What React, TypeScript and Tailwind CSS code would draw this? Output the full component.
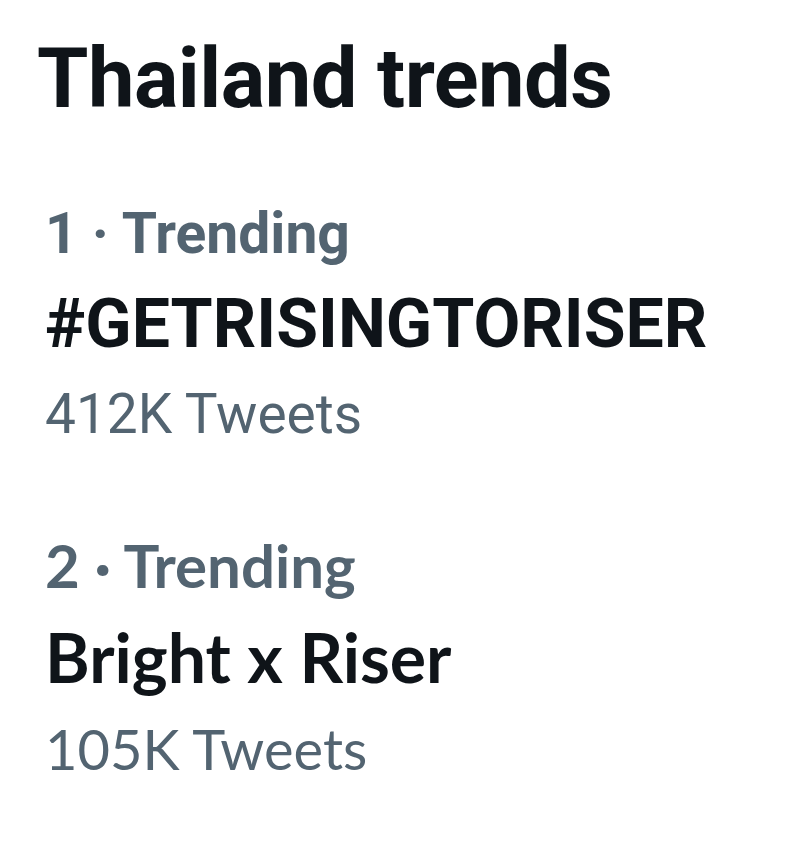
export default function App() {
  return (
    <div className="w-[801px] h-[845px] bg-white overflow-hidden">
      <div className="pt-[34px] pl-[37px]">
        <h1 className="text-[83px] leading-[90px] font-bold text-[#0f1419] tracking-[-0.5px]" style={{ fontFamily: 'Roboto, "Liberation Sans", sans-serif' }}>
          Thailand trends
        </h1>
      </div>
      <div className="pl-[45px] pt-[80px]" style={{ fontFamily: 'Roboto, "Liberation Sans", sans-serif' }}>
        <div className="text-[57px] leading-[60px] font-bold text-[#536471]">1 · Trending</div>
        <div className="text-[68px] leading-[120px] font-bold text-[#0f1419]">#GETRISINGTORISER</div>
        <div className="text-[55px] leading-[61px] text-[#536471]">412K Tweets</div>
      </div>
      <div className="pl-[45px] pt-[88px]" style={{ fontFamily: 'Lato, "Liberation Sans", sans-serif' }}>
        <div className="text-[60px] leading-[64px] font-bold text-[#536471]">2 · Trending</div>
        <div className="text-[68px] leading-[120px] font-bold text-[#0f1419]">Bright x Riser</div>
        <div className="text-[56px] leading-[63px] text-[#536471]">105K Tweets</div>
      </div>
    </div>
  );
}
